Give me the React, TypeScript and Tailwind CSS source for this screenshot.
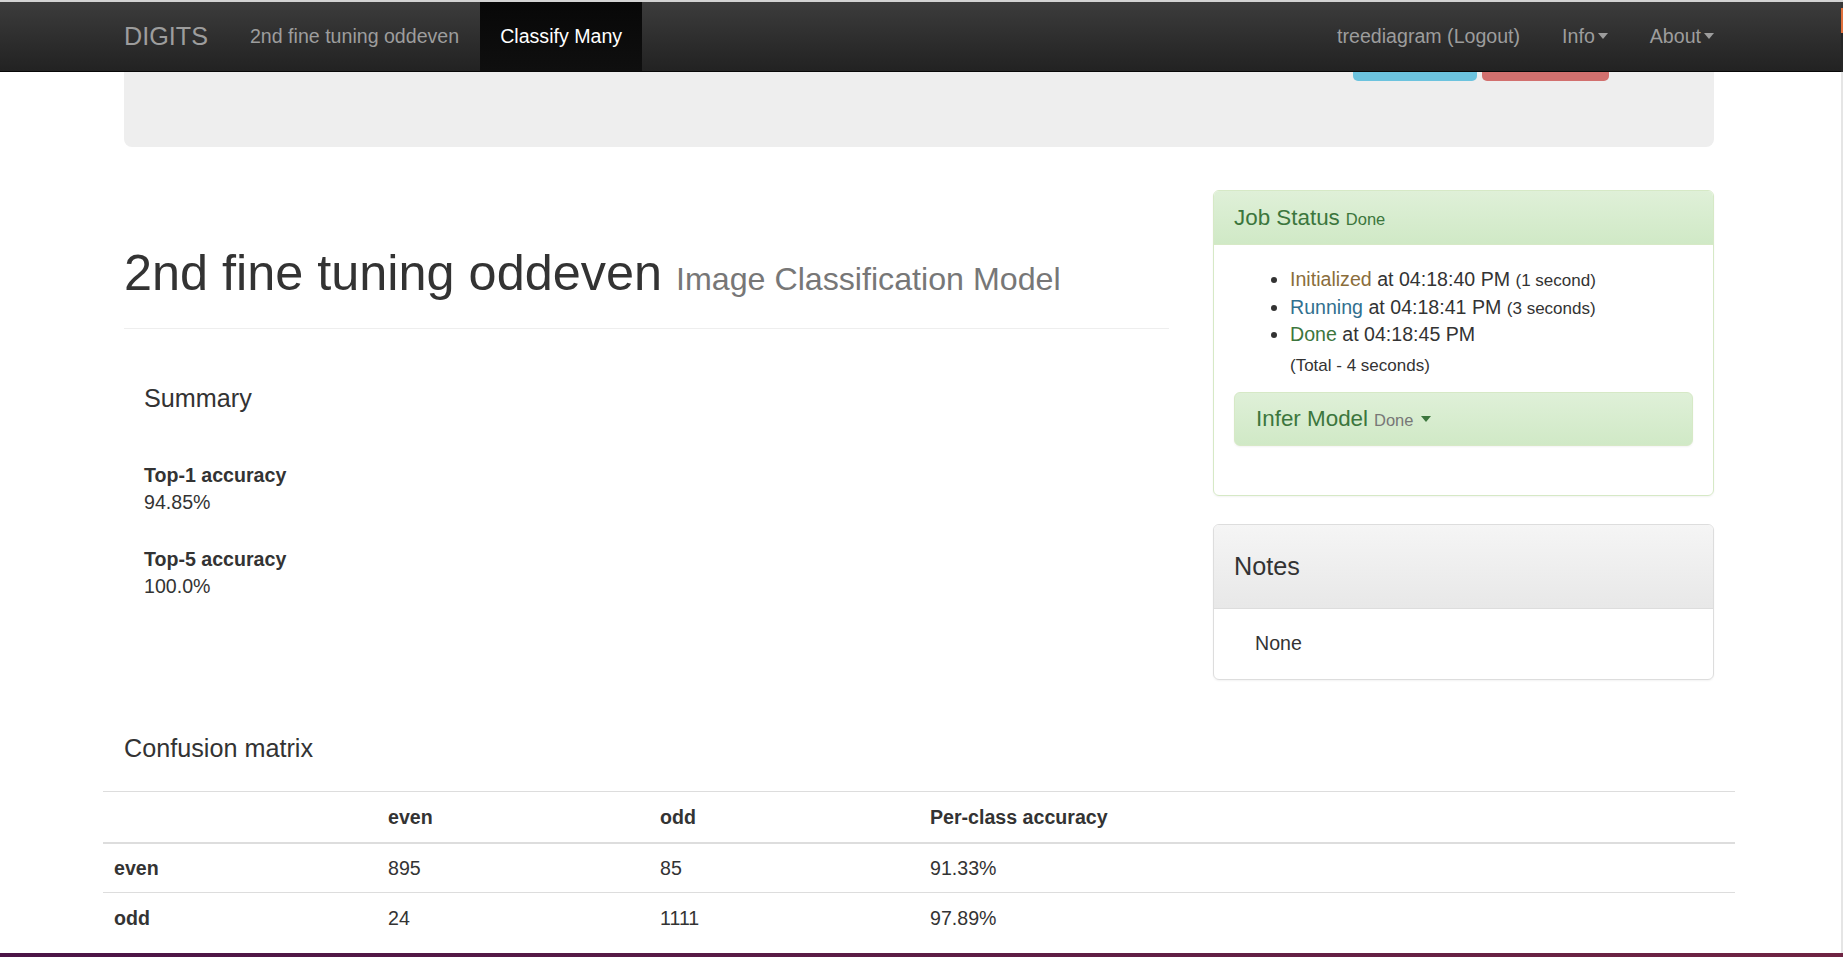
import React from "react";

function Caret({ color }: { color: "gray" | "green" }) {
  return (
    <span
      className={
        color === "gray"
          ? "ml-[3px] inline-block h-0 w-0 border-x-[5px] border-t-[6px] border-x-transparent border-t-[#9d9d9d] align-middle"
          : "ml-[8px] inline-block h-0 w-0 border-x-[5px] border-t-[6px] border-x-transparent border-t-[#3c763d] align-middle"
      }
    />
  );
}

export default function App() {
  return (
    <div className="flex h-[957px] w-[1843px] overflow-hidden bg-white font-['Liberation_Sans',Arial,sans-serif] text-[#333333]">
      <div className="flex w-[1841px] flex-col">
        <div className="h-[2px] bg-[#d3d3d3]" />
        {/* Navbar */}
        <nav className="flex h-[70px] shrink-0 border-b border-[#080808] bg-linear-to-b from-[#3c3c3c] to-[#222222]">
          <div className="ml-[124px] flex w-[1590px] items-stretch text-[19.6px] leading-[28px]">
            <a className="flex items-center pb-[2px] pr-[21px] text-[25.2px] text-[#9d9d9d]">DIGITS</a>
            <a className="flex items-center pb-[2px] px-[21px] text-[#9d9d9d]">2nd fine tuning oddeven</a>
            <a className="flex items-center bg-linear-to-b from-[#080808] to-[#0f0f0f] pb-[2px] px-[20px] text-white">
              Classify Many
            </a>
            <div className="ml-auto flex items-stretch">
              <a className="flex items-center pb-[2px] px-[21px] text-[#9d9d9d]">treediagram (Logout)</a>
              <a className="flex items-center pb-[2px] px-[21px] text-[#9d9d9d]">
                Info
                <Caret color="gray" />
              </a>
              <a className="flex items-center pb-[2px] pl-[21px] text-[#9d9d9d]">
                About
                <Caret color="gray" />
              </a>
            </div>
          </div>
        </nav>

        {/* Main */}
        <main className="flex-1 overflow-hidden">
          <div className="ml-[124px] w-[1590px]">
            {/* Well (scrolled under navbar) */}
            <div className="flex h-[75px] justify-end gap-[5px] rounded-b-[8px] bg-[#eeeeee] pr-[105px]">
              <div className="h-[9px] w-[124px] rounded-b-[5px] bg-[#6cc3de]" />
              <div className="h-[9px] w-[127px] rounded-b-[5px] bg-[#d2706e]" />
            </div>

            {/* Row */}
            <div className="flex gap-[44px]">
              {/* Left column */}
              <div className="w-[1045px]">
                <div className="mt-[98px] border-b border-[#eeeeee] pb-[21px]">
                  <h1 className="text-[50.4px] font-normal leading-[55px] text-[#333333]">
                    2nd fine tuning oddeven{" "}
                    <small className="text-[32.2px] text-[#777777]">Image Classification Model</small>
                  </h1>
                </div>
                <div className="pl-[20px]">
                  <h4 className="mt-[55px] text-[25.2px] leading-[28px]">Summary</h4>
                  <div className="mt-[50px] text-[19.6px] leading-[27px]">
                    <div className="font-bold">Top-1 accuracy</div>
                    <div>94.85%</div>
                  </div>
                  <div className="mt-[30px] text-[19.6px] leading-[27px]">
                    <div className="font-bold">Top-5 accuracy</div>
                    <div>100.0%</div>
                  </div>
                </div>
              </div>

              {/* Right column */}
              <div className="w-[501px] pt-[43px]">
                {/* Job status panel */}
                <div className="rounded-[6px] border border-[#d6e9c6] shadow-[0_1px_2px_rgba(0,0,0,0.05)]">
                  <div className="flex h-[54px] items-center rounded-t-[5px] border-b border-[#d6e9c6] bg-linear-to-b from-[#dff0d8] to-[#d0e9c6] px-[20px] text-[#3c763d]">
                    <span className="text-[22.4px] leading-[25px]">Job Status</span>
                    <span className="ml-[6px] mt-[4px] text-[16.5px]">Done</span>
                  </div>
                  <div className="px-[20px] pb-[21px] pt-[21px] text-[19.6px] leading-[27.6px]">
                    <ul className="list-disc pl-[56px]">
                      <li>
                        <span className="text-[#8a6d3b]">Initialized</span> at 04:18:40 PM{" "}
                        <small className="text-[17px] leading-[1]">(1 second)</small>
                      </li>
                      <li>
                        <span className="text-[#31708f]">Running</span> at 04:18:41 PM{" "}
                        <small className="text-[17px] leading-[1]">(3 seconds)</small>
                      </li>
                      <li>
                        <span className="text-[#3c763d]">Done</span> at 04:18:45 PM
                        <div className="mt-[3px] text-[17px] leading-[28px]">(Total - 4 seconds)</div>
                      </li>
                    </ul>
                    <div className="mb-[28px] mt-[12px] flex h-[54px] items-center rounded-[6px] border border-[#d6e9c6] bg-linear-to-b from-[#dff0d8] to-[#d0e9c6] px-[21px] shadow-[0_1px_2px_rgba(0,0,0,0.05)]">
                      <span className="text-[22.4px] leading-[25px] text-[#3c763d]">Infer Model</span>
                      <span className="ml-[6px] mt-[4px] text-[16.5px] text-[#777777]">Done</span>
                      <Caret color="green" />
                    </div>
                  </div>
                </div>

                {/* Notes panel */}
                <div className="mt-[28px] rounded-[6px] border border-[#dddddd] shadow-[0_1px_2px_rgba(0,0,0,0.05)]">
                  <div className="flex h-[84px] items-center rounded-t-[5px] border-b border-[#dddddd] bg-linear-to-b from-[#f5f5f5] to-[#e8e8e8] px-[20px]">
                    <h4 className="text-[25.2px] leading-[28px]">Notes</h4>
                  </div>
                  <div className="flex h-[70px] items-center pb-[2px] pl-[41px] text-[19.6px] leading-[28px]">None</div>
                </div>
              </div>
            </div>

            {/* Confusion matrix */}
            <h4 className="mt-[54px] text-[25.2px] leading-[28px]">Confusion matrix</h4>
            <div className="-ml-[21px] mt-[29px] w-[1632px] text-[19.6px] leading-[28px]">
              <div className="grid h-[53px] grid-cols-[274px_272px_270px_1fr] items-center border-t border-b-2 border-t-[#dddddd] border-b-[#dddddd] font-bold">
                <div className="px-[11px]" />
                <div className="px-[11px]">even</div>
                <div className="px-[11px]">odd</div>
                <div className="px-[11px]">Per-class accuracy</div>
              </div>
              <div className="grid h-[49px] grid-cols-[274px_272px_270px_1fr] items-center border-b border-[#dddddd]">
                <div className="px-[11px] font-bold">even</div>
                <div className="px-[11px]">895</div>
                <div className="px-[11px]">85</div>
                <div className="px-[11px]">91.33%</div>
              </div>
              <div className="grid h-[50px] grid-cols-[274px_272px_270px_1fr] items-center">
                <div className="px-[11px] font-bold">odd</div>
                <div className="px-[11px]">24</div>
                <div className="px-[11px]">1111</div>
                <div className="px-[11px]">97.89%</div>
              </div>
            </div>
          </div>
        </main>

        <div className="h-[4px] shrink-0 bg-linear-to-r from-[#4b1447] to-[#6f2443]" />
      </div>

      {/* Right window edge */}
      <div className="flex w-[2px] flex-col">
        <div className="h-[2px] bg-[#d3d3d3]" />
        <div className="h-[6px] bg-[#383838]" />
        <div className="h-[25px] bg-[#e0703c]" />
        <div className="h-[39px] bg-[#262626]" />
        <div className="flex-1 bg-[#e5e5e5]" />
        <div className="h-[4px] bg-[#6f2443]" />
      </div>
    </div>
  );
}
